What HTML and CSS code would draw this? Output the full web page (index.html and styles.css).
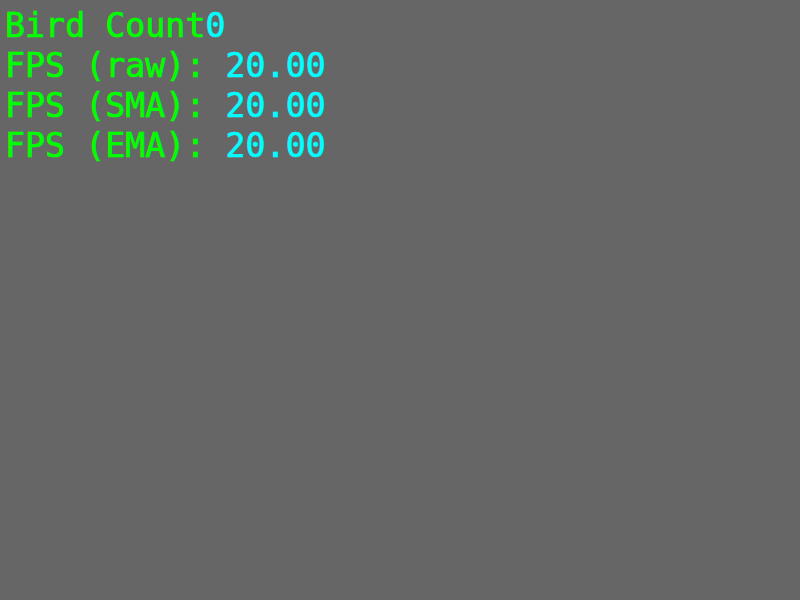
FILE: index.html
```html
<!DOCTYPE html>
<html>
<head>
<meta charset="utf-8">
<link rel="stylesheet" href="styles.css">
</head>
<body>
<div class="stats">
  <div class="row"><span class="label">Bird Count</span><span class="value">0</span></div>
  <div class="row"><span class="label">FPS (raw): </span><span class="value">20.00</span></div>
  <div class="row"><span class="label">FPS (SMA): </span><span class="value">20.00</span></div>
  <div class="row"><span class="label">FPS (EMA): </span><span class="value">20.00</span></div>
</div>
</body>
</html>
```
FILE: styles.css
```css
html, body {
  margin: 0;
  padding: 0;
  background: #666666;
  width: 800px;
  height: 600px;
  overflow: hidden;
}
.stats {
  padding: 6px 0 0 5px;
  font-family: "DejaVu Sans Mono", monospace;
  font-size: 33.3px;
  line-height: 40px;
  -webkit-text-stroke: 0.6px currentColor;
}
.row { white-space: pre; }
.label { color: #00ff00; }
.value { color: #00ffff; }
```
